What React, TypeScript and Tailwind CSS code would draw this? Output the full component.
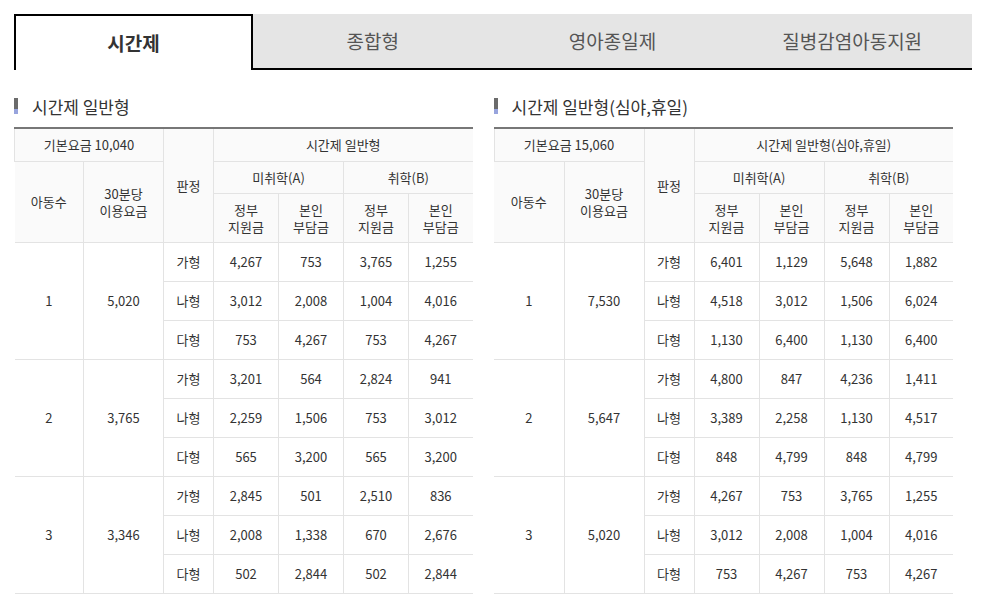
type Row = { grade: string; cells: string[] };
type Group = { kids: string; fee: string; rows: Row[] };

const font = { fontFamily: '"Noto Sans CJK KR", "Noto Sans", sans-serif' };

const tabs = ["시간제", "종합형", "영아종일제", "질병감염아동지원"];

const dayTable: Group[] = [
  {
    kids: "1",
    fee: "5,020",
    rows: [
      { grade: "가형", cells: ["4,267", "753", "3,765", "1,255"] },
      { grade: "나형", cells: ["3,012", "2,008", "1,004", "4,016"] },
      { grade: "다형", cells: ["753", "4,267", "753", "4,267"] },
    ],
  },
  {
    kids: "2",
    fee: "3,765",
    rows: [
      { grade: "가형", cells: ["3,201", "564", "2,824", "941"] },
      { grade: "나형", cells: ["2,259", "1,506", "753", "3,012"] },
      { grade: "다형", cells: ["565", "3,200", "565", "3,200"] },
    ],
  },
  {
    kids: "3",
    fee: "3,346",
    rows: [
      { grade: "가형", cells: ["2,845", "501", "2,510", "836"] },
      { grade: "나형", cells: ["2,008", "1,338", "670", "2,676"] },
      { grade: "다형", cells: ["502", "2,844", "502", "2,844"] },
    ],
  },
];

const nightTable: Group[] = [
  {
    kids: "1",
    fee: "7,530",
    rows: [
      { grade: "가형", cells: ["6,401", "1,129", "5,648", "1,882"] },
      { grade: "나형", cells: ["4,518", "3,012", "1,506", "6,024"] },
      { grade: "다형", cells: ["1,130", "6,400", "1,130", "6,400"] },
    ],
  },
  {
    kids: "2",
    fee: "5,647",
    rows: [
      { grade: "가형", cells: ["4,800", "847", "4,236", "1,411"] },
      { grade: "나형", cells: ["3,389", "2,258", "1,130", "4,517"] },
      { grade: "다형", cells: ["848", "4,799", "848", "4,799"] },
    ],
  },
  {
    kids: "3",
    fee: "5,020",
    rows: [
      { grade: "가형", cells: ["4,267", "753", "3,765", "1,255"] },
      { grade: "나형", cells: ["3,012", "2,008", "1,004", "4,016"] },
      { grade: "다형", cells: ["753", "4,267", "753", "4,267"] },
    ],
  },
];

const th = "border border-[#e3e3e3] bg-[#fafafa] font-normal text-[#333] p-0 text-center align-middle";
const td = "border border-[#e3e3e3] text-[#333] p-0 text-center align-middle";

function FeeTable({
  title,
  base,
  groups,
  firstCol,
}: {
  title: string;
  base: string;
  groups: Group[];
  firstCol: number;
}) {
  return (
    <div>
      <h3 className="flex items-center h-[20px] text-[17px] text-[#333] font-normal leading-none">
        <span className="flex flex-col w-[4px] h-[16px] mr-[14px]">
          <span className="h-[11px] bg-[#6b6b6b]" />
          <span className="h-[5px] bg-[#98a4dd]" />
        </span>
        {title}
      </h3>
      <table
        className="mt-[11px] border-collapse table-fixed text-[13px] leading-[17px] border-t-2 border-t-[#777]"
        style={{ width: firstCol + 389 }}
      >
        <colgroup>
          <col style={{ width: firstCol }} />
          <col className="w-[80px]" />
          <col className="w-[50px]" />
          <col className="w-[65px]" />
          <col className="w-[65px]" />
          <col className="w-[65px]" />
          <col className="w-[64px]" />
        </colgroup>
        <thead>
          <tr className="h-[33px]">
            <th colSpan={2} className={`${th} border-t-0`}>
              기본요금 {base}
            </th>
            <th rowSpan={3} className={`${th} border-t-0`}>
              판정
            </th>
            <th colSpan={4} className={`${th} border-t-0 border-r-0`}>
              {title}
            </th>
          </tr>
          <tr className="h-[32px]">
            <th rowSpan={2} className={`${th} border-l-0`}>
              아동수
            </th>
            <th rowSpan={2} className={th}>
              30분당
              <br />
              이용요금
            </th>
            <th colSpan={2} className={th}>
              미취학(A)
            </th>
            <th colSpan={2} className={`${th} border-r-0`}>
              취학(B)
            </th>
          </tr>
          <tr className="h-[49px]">
            <th className={th}>
              정부
              <br />
              지원금
            </th>
            <th className={th}>
              본인
              <br />
              부담금
            </th>
            <th className={th}>
              정부
              <br />
              지원금
            </th>
            <th className={`${th} border-r-0`}>
              본인
              <br />
              부담금
            </th>
          </tr>
        </thead>
        <tbody>
          {groups.map((g) =>
            g.rows.map((r, i) => (
              <tr key={g.kids + r.grade} className="h-[39px]">
                {i === 0 && (
                  <>
                    <td rowSpan={3} className={`${td} border-l-0`}>
                      {g.kids}
                    </td>
                    <td rowSpan={3} className={td}>
                      {g.fee}
                    </td>
                  </>
                )}
                <td className={td}>{r.grade}</td>
                {r.cells.map((c, j) => (
                  <td key={j} className={j === 3 ? `${td} border-r-0` : td}>
                    {c}
                  </td>
                ))}
              </tr>
            ))
          )}
        </tbody>
      </table>
    </div>
  );
}

export default function App() {
  return (
    <div className="w-[982px] h-[599px] bg-white overflow-hidden pt-[14px]" style={font}>
      <div className="flex mx-[14px] w-[958px] h-[56px]">
        {tabs.map((t, i) =>
          i === 0 ? (
            <div
              key={t}
              className="w-[239px] shrink-0 flex items-center justify-center border-2 border-b-0 border-black bg-white text-[19px] font-bold text-[#333]"
            >
              {t}
            </div>
          ) : (
            <div
              key={t}
              className="flex-1 flex items-center justify-center bg-[#e5e5e5] border-b-2 border-black text-[19px] text-[#555]"
            >
              {t}
            </div>
          )
        )}
      </div>
      <div className="flex gap-[21px] mx-[14px] mt-[26px]">
        <FeeTable title="시간제 일반형" base="10,040" groups={dayTable} firstCol={69} />
        <FeeTable title="시간제 일반형(심야,휴일)" base="15,060" groups={nightTable} firstCol={70} />
      </div>
    </div>
  );
}
